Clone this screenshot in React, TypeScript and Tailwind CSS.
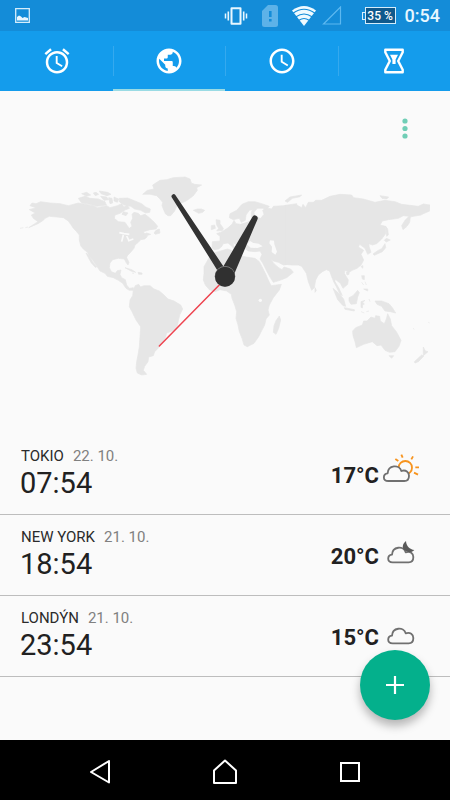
import { useState } from "react";
import type { ReactNode } from "react";
import { MdAccessAlarm, MdAccessTime, MdPublic } from "react-icons/md";

type Weather = "sun" | "moon" | "cloud";

interface City {
  name: string;
  date: string;
  time: string;
  temp: string;
  weather: Weather;
}

const CITIES: City[] = [
  { name: "TOKIO", date: "22. 10.", time: "07:54", temp: "17°C", weather: "sun" },
  { name: "NEW YORK", date: "21. 10.", time: "18:54", temp: "20°C", weather: "moon" },
  { name: "LONDÝN", date: "21. 10.", time: "23:54", temp: "15°C", weather: "cloud" },
];

function HourglassIcon() {
  return (
    <svg viewBox="0 0 30 30" className="size-[30px]" fill="none" stroke="currentColor">
      <path
        d="M6.300 3.700h17.400v2.500L19.200 15l4.500 8.800v2.500H6.300v-2.500L10.800 15 6.300 6.200z"
        strokeWidth="2.400"
        strokeLinejoin="round"
      />
      <path d="M11 8.800h8l-2.400 4.700V18h-3.200v-4.500z" fill="currentColor" stroke="none" />
    </svg>
  );
}

const TABS: { id: string; label: string; icon: ReactNode }[] = [
  { id: "alarm", label: "Budík", icon: <MdAccessAlarm size={30} /> },
  { id: "world", label: "Světový čas", icon: <MdPublic size={30} /> },
  { id: "stopwatch", label: "Stopky", icon: <MdAccessTime size={30} /> },
  { id: "timer", label: "Časovač", icon: <HourglassIcon /> },
];

function StatusBar() {
  return (
    <div className="flex h-[31px] items-center bg-[#148cd8] pr-[10px] pl-[15px] text-white">
      <svg viewBox="0 0 15 15" className="size-[15px]" fill="none">
        <path d="M.7.700h13.600v13.600H.700z" stroke="#d5edfb" strokeWidth="1.300" />
        <path d="M2 12.500V9l2-1.500 2 1 1.500 1.500 2-1 3.500 1v2.500z" fill="#e8f6ff" />
      </svg>

      <svg viewBox="0 0 24 18" className="ml-auto h-[18px] w-6" fill="none" stroke="#e8f7ff">
        <path d="M7.500 1.200h9v15.600h-9z" strokeWidth="2" strokeLinejoin="round" />
        <path d="M4.300 4.500v9M19.700 4.500v9" strokeWidth="1.600" />
        <path d="M1.500 6.500v5M22.500 6.500v5" strokeWidth="1.500" />
      </svg>

      <svg viewBox="0 0 16 22" className="ml-[14px] h-[22px] w-4">
        <path d="M6 0h7.500Q16 0 16 2.500v17q0 2.500-2.500 2.500h-11Q0 22 0 19.500V6z" fill="#5db2e8" />
        <path d="M7 6h2.600v6H7zM7 14h2.600v2.500H7z" fill="#148cd8" />
      </svg>

      <svg viewBox="0 0 24 20" className="ml-[14px] h-5 w-6">
        <path d="M0 4.500Q12-4.500 24 4.500L12 20z" fill="#effaff" />
        <path
          d="M1 7.200Q12-.800 23 7.200M4 10.800q8-5.600 16 0M7 14.300q5-3.500 10 0"
          fill="none"
          stroke="#148cd8"
          strokeWidth="1.100"
        />
      </svg>

      <svg viewBox="0 0 20 19" className="ml-[6px] h-[19px] w-5" fill="none" stroke="#5cb8f0">
        <path d="M1.500 18H18.500V1z" strokeWidth="1.200" />
      </svg>

      <div className="ml-5 flex items-center">
        <span className="h-2 w-[3px] border border-r-0 border-[#d5edfb]" />
        <span className="flex h-[17px] w-[31px] items-center justify-center border border-[#d5edfb] bg-[#10598c] text-[12px] leading-none font-medium whitespace-nowrap">
          35 %
        </span>
      </div>
      <span className="ml-[9px] text-[18px] leading-none font-medium text-[#e8f7ff]">0:54</span>
    </div>
  );
}

function WorldMap() {
  return (
    <svg viewBox="0 0 1230 630" className="w-full" role="img" aria-label="00:54">
      <g fill="#e6e6e6" stroke="#e6e6e6" strokeWidth="2" strokeLinejoin="round">
        {/* Americas */}
        <g transform="translate(-30 -15)">
          <path d="M60 122L66 114 78 116 92 110 120 114 150 116 175 122 205 114 225 118 250 122 262 128 290 122 300 128 322 122 335 116 342 126 352 120 358 130 345 135 330 145 315 150 313 160 325 170 345 172 352 182 358 190 366 184 362 172 368 160 366 148 372 142 385 145 392 152 405 148 418 158 433 172 443 184 438 192 420 194 400 200 405 208 412 215 404 222 392 224 385 232 375 240 372 250 362 262 352 272 350 278 357 292 354 300 348 292 343 282 325 280 308 284 300 294 298 308 304 320 316 325 322 317 333 315 330 328 335 338 346 344 350 360 358 370 370 368 370 376 358 376 348 370 338 355 325 346 310 338 292 334 285 325 270 318 258 300 250 288 238 272 232 262 220 252 212 242 208 225 208 210 200 200 190 190 182 178 175 168 160 158 140 156 118 154 105 160 100 166 84 176 70 182 56 188 84 170 70 160 64 150 76 144 58 134 78 128Z" />
          <path d="M228 264l8 6 12 20 12 16-4 1-12-13-10-18zM30 190l10-2M46 188l8-2" />
          <path d="M205 100l20-6 15 6 25 2 20 8 4 10-29 4-20-6-25-4zM215 86l15-4 12 8-12 4zM250 84l8-2 8 6-10 4zM268 78l25 4 10 6-12 4-18-6zM272 94l18 2 6 8-14 2zM296 98l10 2 2 14-8 2zM312 96l14 6-4 10-10-4z" />
          <path d="M328 100l25-1 22 9 20 8 12 10 14 6-2 10-12 2-15-8-18-4-12-8-20-4-14-10zM340 140l14 4-6 8-12-4z" />
          <path d="M432 204l6-8 10-4 2 12-14 4zM400 208l10-4 12 4-12 4zM345 308l20 6 12 8-14-4zM384 322l12 2 0 4-10 0zM366 324l6 1" />
          <path d="M370 374L376 362 386 358 392 366 402 362 420 362 432 372 448 378 462 390 474 402 492 408 512 420 518 432 510 448 506 462 502 482 492 496 470 504 466 518 456 532 446 548 434 560 430 572 416 576 414 590 404 604 400 616 410 628 395 630 382 624 378 610 380 590 384 570 388 545 390 515 392 485 378 465 366 440 358 425 360 405 368 392Z" />
          <path
            d="M328 203l14 3 16 2M340 210l-5 20M350 213l6 12M354 228l16-6"
            fill="none"
            stroke="#fafafa"
            strokeWidth="5"
          />
        </g>

        {/* Greenland, Europe, Africa */}
        <g transform="translate(360 -15)">
          <path d="M8 88L22 76 42 72 38 60 60 46 80 44 100 38 135 36 150 42 154 54 164 58 185 60 170 68 172 76 160 92 150 100 138 108 120 116 110 124 104 138 92 152 84 152 76 146 70 132 66 122 68 112 60 102 50 92 30 88ZM160 136l12-4 12 0 10 4-6 6-12 3z" />
          <path d="M205 282L215 266 235 260 262 252 274 256 276 268 290 276 300 272 318 276 345 280 358 290 366 305 376 325 388 352 394 362 424 358 418 375 400 398 388 420 384 435 388 450 378 462 374 480 366 495 356 515 342 535 322 545 312 540 306 520 298 500 294 480 288 460 290 440 284 420 276 400 274 388 260 378 240 374 225 380 208 374 196 360 190 345 192 325 192 305ZM418 453l4 12-6 25-8 18-8-6 2-20 6-15z" />
          <path d="M217 230L240 228 240 214 230 206 246 200 262 190 276 178 282 166 288 176 302 178 322 172 338 164 350 158 362 160 372 148 368 136 378 128 395 132 400 124 430 122 470 116 470 298 445 298 430 300 415 292 400 288 392 282 402 296 416 308 426 314 432 306 452 312 460 322 440 338 420 346 400 352 392 340 380 318 368 294 360 282 366 268 360 258 345 260 325 258 314 250 308 240 310 250 304 258 298 248 288 240 278 232 282 244 292 250 284 256 276 244 264 234 250 236 244 246 236 252 222 254 216 248Z" />
          <path d="M268 158L270 146 290 136 306 118 325 110 345 110 365 116 388 124 378 134 368 130 352 130 342 142 344 152 340 158 356 158 340 164 334 156 334 142 338 134 328 136 318 150 316 166 304 172 298 160 280 164ZM228 164l12 2 0 10 10 14-2 6-18 2 6-8-6-10zM214 182l10-2 2 10-12 4z" />
          <g fill="#fafafa" stroke="none">
            <path d="M320 238l10-10 10 6 16 2 12 8-16 5-20-1zM390 226l12 1 1 11 8 22-5 9-11-8 1-16-8-10z" />
            <circle cx="361" cy="406" r="5" />
          </g>
        </g>

        {/* Asia and Oceania */}
        <g transform="translate(795 -15)">
          <path d="M0 122L35 120 50 128 54 118 62 128 70 112 85 112 92 106 110 106 135 94 165 88 200 90 206 98 235 102 270 112 300 106 330 110 350 118 400 124 415 117 435 120 434 138 415 146 408 150 385 154 376 156 374 172 366 184 354 194 350 182 360 166 372 154 355 152 340 160 310 164 292 168 285 180 302 184 302 206 290 222 275 236 262 240 252 236 252 244 258 262 248 268 240 250 224 238 220 246 236 256 228 268 236 285 228 300 216 310 202 316 192 322 180 316 178 325 190 345 188 358 174 370 166 355 150 342 150 350 162 370 172 392 165 388 154 365 146 350 140 335 134 318 124 314 112 320 100 330 92 345 88 368 80 376 70 350 64 325 50 304 40 300 20 300 0 298Z" />
          <path d="M0 108L15 96 50 90 45 95 22 100 8 112ZM285 92l26 4-6 6-14-2zM302 184l6 8 2 18-5 4zM298 226l6-6 12 5-12 6zM300 236l2 12-10 12-24 11-4-4 14-10 12-6zM184 322l8-2 0 8-6 2zM228 304l6-2-1 8zM90 368l4 8-4 6z" />
          <path d="M144 370l14 12 18 20 6 22-8-2-16-18zM178 428l30 6 0 4-28-5zM192 398l12-6 14-16 5 7-5 13-4 20-16 2-6-10zM228 410l12-4-7 7 5 4-5 2-1 10-4-2zM230 332l8 0 0 12-6-2zM230 352l6 8M240 350l4 10M236 372l12 0 0 6zM252 402l3 8M228 440l10 4M244 440l8-2" />
          <path d="M270 408L290 408 312 416 322 428 332 444 316 440 300 438 290 424 276 418ZM203 498L212 488 232 480 236 468 246 468 258 456 270 460 272 452 284 454 286 468 298 476 304 462 308 446 316 462 320 482 334 500 348 526 342 544 330 560 314 562 300 556 288 540 276 542 262 530 236 538 214 548 210 530 204 512ZM312 572l14 0-6 8zM415 546l6 12 8 2-14 12zM410 570l6 4-16 16-10 4-2-4zM384 490l4 3M430 472l4 2" />
        </g>
      </g>

      {/* Clock hands */}
      <g transform="translate(615 319)">
        <path d="M4 4L-197 209" stroke="#ee4450" strokeWidth="4.500" strokeLinecap="round" />
        <path d="M-159-236a6 6 0 0 1 10-8L2-20-18-10z" fill="#333" />
        <path d="M82-178a8.500 8.500 0 0 1 15 8L28-8-10-21z" fill="#333" />
        <circle r="31" fill="#8a8a8a" />
        <circle cy="1" r="30" fill="#303030" />
      </g>
    </svg>
  );
}

function WeatherIcon({ type }: { type: Weather }) {
  const cloud =
    "M265 138C247 138 248 117 263 115C264 90 298 87 304 108C318 103 327 112 327 122C327 132 321 138 313 138Z";
  return (
    <svg
      viewBox="243 51 120 96"
      className="h-8 w-10"
      fill="none"
      stroke="#707070"
      strokeWidth="5.500"
      strokeLinejoin="round"
    >
      {type === "sun" && (
        <g stroke="#f7941e" strokeWidth="5.500">
          <circle cx="316" cy="98" r="20" />
          <path d="M304 59l4 9M339 64l-5 9M286 72l9 6M346 97h11M342 113l12 6" />
        </g>
      )}
      <path d={cloud} fill="#fafafa" transform={type === "sun" ? undefined : "translate(13 1)"} />
      {type === "moon" && (
        <path
          d="M318 75C306 84 306 98 314 103C326 112 338 108 343 102C329 100 319 91 318 75Z"
          fill="#5a5a5a"
          stroke="none"
        />
      )}
    </svg>
  );
}

function CityRow({ city }: { city: City }) {
  return (
    <li className="flex items-start justify-between border-b border-[#bdbdbd] pt-[13px] pr-[29px] pb-[13px] pl-5">
      <div>
        <div className="flex gap-[9px] pl-px text-[15px] leading-[18px]">
          <span className="text-[#2b2b2b]">{city.name}</span>
          <span className="text-[#808080]">{city.date}</span>
        </div>
        <p className="text-[29px] leading-9 text-[#212121]">{city.time}</p>
      </div>
      <div className="flex items-start gap-[2px] pt-[5px]">
        <span className="pt-2 text-[22px] leading-8 font-bold text-[#212121]">{city.temp}</span>
        <WeatherIcon type={city.weather} />
      </div>
    </li>
  );
}

export default function App() {
  const [tab, setTab] = useState("world");

  return (
    <div className="flex min-h-screen flex-col bg-[#fafafa] font-['Roboto','Noto_Sans',sans-serif]">
      <header>
        <StatusBar />
        <nav className="grid h-[60px] grid-cols-4 bg-[#149cec] text-white">
          {TABS.map((t, i) => (
            <button
              key={t.id}
              aria-label={t.label}
              onClick={() => setTab(t.id)}
              className={`flex items-center border-b-2 pt-[2px] ${
                tab === t.id ? "border-[#9adbe4]" : "border-transparent"
              }`}
            >
              <span
                className={`flex h-[30px] flex-1 items-center justify-center border-l ${
                  i > 0 ? "border-[#35a9ee]" : "border-transparent"
                }`}
              >
                {t.icon}
              </span>
            </button>
          ))}
        </nav>
      </header>

      <main className="relative flex-1">
        <section className="px-5 pt-[17px] pb-[54px]">
          <div className="mb-[22px] flex justify-end pr-[5px]">
            <button aria-label="Možnosti" className="flex size-10 items-center justify-center">
              <svg viewBox="0 0 6 22" className="h-[22px] w-[6px]" fill="#70ceb6">
                <circle cx="3" cy="4" r="2.600" />
                <circle cx="3" cy="11.500" r="2.600" />
                <circle cx="3" cy="19" r="2.600" />
              </svg>
            </button>
          </div>
          <WorldMap />
        </section>

        <ul>
          {CITIES.map((city) => (
            <CityRow key={city.name} city={city} />
          ))}
        </ul>

        <button
          aria-label="Přidat město"
          className="absolute right-5 bottom-5 flex size-[70px] items-center justify-center rounded-full bg-[#04b08c] shadow-[0_6px_10px_rgba(0,0,0,0.28)]"
        >
          <svg viewBox="0 0 18 18" className="size-[18px]" stroke="#fff" strokeWidth="2.200">
            <path d="M9 0v18M0 9h18" />
          </svg>
        </button>
      </main>

      <footer className="flex h-[60px] items-center justify-center gap-[93px] bg-black pt-1">
        <button aria-label="Zpět" className="flex size-8 items-center justify-center">
          <svg viewBox="0 0 24 24" className="size-6" fill="none" stroke="#fff" strokeWidth="2">
            <path d="M21 1v21.500L3 12z" strokeLinejoin="round" />
          </svg>
        </button>
        <button aria-label="Domů" className="flex size-8 items-center justify-center">
          <svg viewBox="0 0 24 26" className="h-[26px] w-6" fill="none" stroke="#fff" strokeWidth="2">
            <path d="M1 24V11.500L12 1.500l11 10V24z" strokeLinejoin="round" />
          </svg>
        </button>
        <button aria-label="Poslední aplikace" className="flex size-8 items-center justify-center">
          <svg viewBox="0 0 24 24" className="size-6" fill="none" stroke="#fff" strokeWidth="2">
            <path d="M3 3h18v18H3z" />
          </svg>
        </button>
      </footer>
    </div>
  );
}
